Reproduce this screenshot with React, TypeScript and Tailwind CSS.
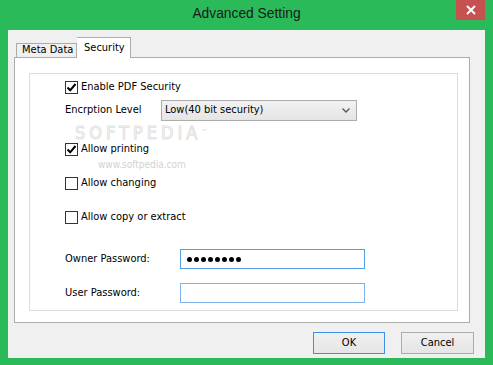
import React from "react";

const ui = { fontFamily: '"DejaVu Sans Condensed", "Liberation Sans", Arial, sans-serif' };

const CheckBox = ({ checked, label }: { checked?: boolean; label: string }) => (
    <div className="relative z-10 flex items-center h-[14px] text-[11px] text-black">
        <span className="w-[13px] h-[13px] border border-[#333333] bg-white flex items-center justify-center">
            {checked && (
                <svg width="11" height="11" viewBox="0 0 11 11">
                    <path d="M1.5 5.5 L4.2 8.3 L9.5 2" fill="none" stroke="#000" strokeWidth="2" />
                </svg>
            )}
        </span>
        <span className="ml-[3px]">{label}</span>
    </div>
);

export default function App() {
    return (
        <div className="w-[493px] h-[365px] bg-[#2bba5a] flex flex-col overflow-hidden" style={ui}>
            {/* Title bar */}
            <div className="relative h-[30px] flex items-center justify-center shrink-0">
                <span className="text-[13.8px] text-[#1a1a1a] mt-[-1px]" style={{ fontFamily: '"Liberation Sans", Arial, sans-serif' }}>
                    Advanced Setting
                </span>
                <button className="absolute right-[8px] top-0 w-[29px] h-[20px] bg-[#c75050] flex items-center justify-center">
                    <svg width="10" height="10" viewBox="0 0 10 10">
                        <path d="M1 1 L9 9 M9 1 L1 9" stroke="#fff" strokeWidth="2" />
                    </svg>
                </button>
            </div>

            {/* Client area */}
            <div className="mx-[8px] h-[328px] bg-[#f0f0f0] flex flex-col px-[6px]">
                {/* Tabs */}
                <div className="flex items-end h-[27px] pt-[7px] pl-[2px]">
                    <div className="h-[14px] w-[61px] border border-b-0 border-[#acacac] bg-[#f0f0f0] text-[11px] flex items-center pl-[5px] text-black">
                        Meta Data
                    </div>
                    <div className="h-[21px] w-[54px] border border-b-0 border-l-0 border-[#acacac] bg-white text-[11px] flex items-start pt-[2px] pl-[7px] text-black relative top-[1px]">
                        Security
                    </div>
                </div>

                {/* Tab panel */}
                <div className="w-[456px] h-[266px] border border-[#acacac] bg-white pl-[14px] pt-[15px]">
                    <div className="relative w-[429px] h-[238px] border border-[#dcdcdc] flex flex-col pl-[35px]">
                        {/* watermark */}
                        <div className="absolute left-[45px] top-[52px] h-[13px] leading-[13px] text-[18px] tracking-[4px] text-white [-webkit-text-stroke:1px_#e2e2e2] select-none">
                            SOFTPEDIA<span className="text-[7px] align-top text-[#dadada] [-webkit-text-stroke:0px]">™</span>
                        </div>
                        <div className="absolute left-[68px] top-[86px] text-[10px] leading-[10px] text-[#d2d2d2] select-none">
                            www.softpedia.com
                        </div>

                        <div className="mt-[6px]">
                            <CheckBox checked label="Enable PDF Security" />
                        </div>

                        <div className="mt-[6px] flex items-center h-[21px]">
                            <span className="w-[96px] text-[11px] text-black">Encrption Level</span>
                            <div className="w-[196px] h-[21px] border border-[#acacac] bg-gradient-to-b from-[#f2f2f2] to-[#e5e5e5] flex items-center justify-between pl-[3px] pr-[6px] text-[11px] text-black">
                                <span>Low(40 bit security)</span>
                                <svg width="8" height="5" viewBox="0 0 8 5">
                                    <path d="M0.5 0.5 L4 4 L7.5 0.5" fill="none" stroke="#555" strokeWidth="1.3" />
                                </svg>
                            </div>
                        </div>

                        <div className="mt-[21px]">
                            <CheckBox checked label="Allow printing" />
                        </div>
                        <div className="mt-[20px]">
                            <CheckBox label="Allow changing" />
                        </div>
                        <div className="mt-[20px]">
                            <CheckBox label="Allow copy or extract" />
                        </div>

                        <div className="mt-[25px] flex items-center h-[20px]">
                            <span className="w-[115px] text-[11px] text-black">Owner Password:</span>
                            <div className="w-[185px] h-[20px] border border-[#569de5] bg-white flex items-center pl-[6px] gap-[2px]">
                                {Array.from({ length: 8 }).map((_, i) => (
                                    <span key={i} className="w-[5px] h-[5px] rounded-full bg-black" />
                                ))}
                            </div>
                        </div>
                        <div className="mt-[14px] flex items-center h-[20px]">
                            <span className="w-[115px] text-[11px] text-black">User Password:</span>
                            <div className="w-[185px] h-[20px] border border-[#7eb4ea] bg-white" />
                        </div>
                    </div>
                </div>

                {/* Buttons */}
                <div className="flex justify-end gap-[16px] mt-[9px] pr-[5px]">
                    <button className="w-[72px] h-[22px] border border-[#3c8fe6] bg-gradient-to-b from-[#f0f0f0] to-[#e5e5e5] text-[11px] text-black">
                        OK
                    </button>
                    <button className="w-[73px] h-[22px] border border-[#acacac] bg-gradient-to-b from-[#f0f0f0] to-[#e5e5e5] text-[11px] text-black">
                        Cancel
                    </button>
                </div>
            </div>
        </div>
    );
}
